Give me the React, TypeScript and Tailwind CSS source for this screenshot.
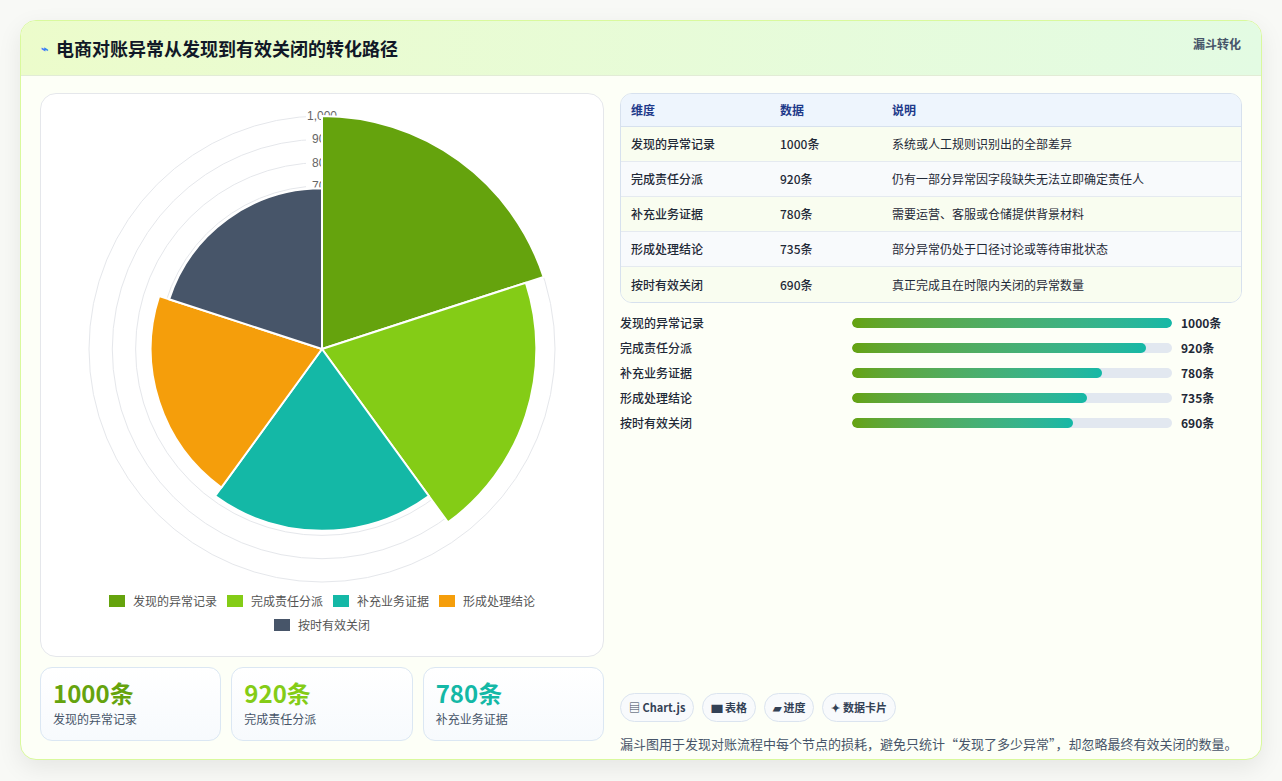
import React from "react";

const data = [
  { name: "发现的异常记录", v: 1000, color: "#65a30d", desc: "系统或人工规则识别出的全部差异" },
  { name: "完成责任分派", v: 920, color: "#84cc16", desc: "仍有一部分异常因字段缺失无法立即确定责任人" },
  { name: "补充业务证据", v: 780, color: "#14b8a6", desc: "需要运营、客服或仓储提供背景材料" },
  { name: "形成处理结论", v: 735, color: "#f59e0b", desc: "部分异常仍处于口径讨论或等待审批状态" },
  { name: "按时有效关闭", v: 690, color: "#475569", desc: "真正完成且在时限内关闭的异常数量" },
];

function Polar() {
  const cx = 281, cy = 253, k = 0.233;
  const pt = (r: number, deg: number) => {
    const a = (deg * Math.PI) / 180;
    return [cx + r * Math.cos(a), cy + r * Math.sin(a)];
  };
  return (
    <svg width="562" height="490" viewBox="0 0 562 490">
      {[1000, 900, 800, 700, 600, 500, 400, 300, 200, 100].map((t) => (
        <circle key={t} cx={cx} cy={cy} r={t * k} fill="none" stroke="#e5e7eb" strokeWidth="1" />
      ))}
      {[1000, 900, 800, 700].map((t) => (
        <g key={t}>
          <rect x={cx - 16} y={cy - t * k - 7} width="32" height="13" fill="white" />
          <text x={cx} y={cy - t * k + 4} textAnchor="middle" fontSize="12" fill="#666" fontFamily="Liberation Sans, sans-serif">
            {t === 1000 ? "1,000" : t}
          </text>
        </g>
      ))}
      {data.map((d, i) => {
        const r = d.v * k;
        const a0 = -90 + i * 72, a1 = a0 + 72;
        const [x0, y0] = pt(r, a0);
        const [x1, y1] = pt(r, a1);
        return (
          <path key={i} d={`M${cx},${cy} L${x0},${y0} A${r},${r} 0 0 1 ${x1},${y1} Z`} fill={d.color} stroke="white" strokeWidth="2" />
        );
      })}
    </svg>
  );
}

export default function App() {
  const f = { fontFamily: "'Noto Sans CJK SC', 'Noto Sans', sans-serif" };
  return (
    <div style={f} className="w-[1282px] h-[781px] bg-[#f8f9f6] p-5 pb-[21px]">
      <div className="h-full rounded-2xl border border-[#d9f99d] bg-[#fdfff7] shadow-[0_8px_24px_rgba(0,0,0,0.08)] overflow-hidden flex flex-col">
        <div className="h-[55px] shrink-0 flex justify-between px-5 bg-gradient-to-r from-[#ecfccb] to-[#e3fbe3] border-b border-[#e2ecd6]">
          <div className="flex items-center gap-2 text-[18px] font-bold text-[#111827]">
            <span className="text-[#3b82f6] text-[12px]">⌁</span>电商对账异常从发现到有效关闭的转化路径
          </div>
          <div className="pt-[14px] text-[12px] font-bold text-[#475569]">漏斗转化</div>
        </div>
        <div className="flex gap-4 px-[19px] pt-[17px]">
          <div className="w-[564px] flex flex-col gap-[10px]">
            <div className="h-[564px] rounded-2xl border border-[#e5e7eb] bg-white flex flex-col items-center">
              <div className="pt-[2px]"><Polar /></div>
              <div className="flex flex-wrap justify-center gap-x-[10px] gap-y-[6px] w-[470px] text-[12px] text-[#555] mt-[6px]">
                {data.map((d) => (
                  <div key={d.name} className="flex items-center gap-2">
                    <span className="w-[16px] h-[12px]" style={{ background: d.color }} />
                    {d.name}
                  </div>
                ))}
              </div>
            </div>
            <div className="flex gap-[10px]">
              {data.slice(0, 3).map((d) => (
                <div key={d.name} className="flex-1 h-[74px] rounded-xl border border-[#dbe7f3] bg-gradient-to-b from-white to-[#f7fafd] px-3 pt-[10px]">
                  <div className="text-[24px] font-bold leading-[30px]" style={{ color: d.color }}>{d.v}条</div>
                  <div className="text-[12px] text-[#475569] mt-[2px]">{d.name}</div>
                </div>
              ))}
            </div>
          </div>
          <div className="flex-1 flex flex-col">
            <div className="rounded-xl border border-[#d7e1ee] overflow-hidden text-[12px]">
              <div className="flex h-[33px] items-center bg-[#eef5fd] border-b border-[#d7e1ee] font-bold text-[#1e3a8a]">
                <div className="w-[159px] pl-[10px]">维度</div>
                <div className="w-[112px]">数据</div>
                <div>说明</div>
              </div>
              {data.map((d, i) => (
                <div key={d.name} className={`flex h-[35px] items-center text-[#1f2937] ${i % 2 ? "bg-[#f8fafc]" : "bg-[#f9fdf0]"} ${i < 4 ? "border-b border-[#e5eaf0]" : ""}`}>
                  <div className="w-[159px] pl-[10px] font-medium">{d.name}</div>
                  <div className="w-[112px] font-medium">{d.v}条</div>
                  <div>{d.desc}</div>
                </div>
              ))}
            </div>
            <div className="flex flex-col gap-[9px] mt-[12px]">
              {data.map((d) => (
                <div key={d.name} className="flex items-center h-[16px] text-[12px] font-medium text-[#1f2937]">
                  <div className="w-[232px]">{d.name}</div>
                  <div className="w-[320px] h-[10px] rounded-full bg-[#e2e8f0] overflow-hidden">
                    <div className="h-full rounded-full bg-gradient-to-r from-[#65a30d] to-[#14b8a6]" style={{ width: `${d.v / 10}%` }} />
                  </div>
                  <div className="ml-[9px] font-bold">{d.v}条</div>
                </div>
              ))}
            </div>
            <div className="flex-1" />
            <div className="flex gap-2 mt-[262px] text-[11px] font-bold text-[#334155]">
              {["▤ Chart.js", "▆ 表格", "▰ 进度", "✦ 数据卡片"].map((t) => (
                <span key={t} className="h-[29px] px-2 flex items-center rounded-full border border-[#dbe4ef] bg-[#f8fafc]">{t}</span>
              ))}
            </div>
            <div className="mt-[12px] text-[13px] text-[#475569]">
              漏斗图用于发现对账流程中每个节点的损耗，避免只统计“发现了多少异常”，却忽略最终有效关闭的数量。
            </div>
          </div>
        </div>
      </div>
    </div>
  );
}
